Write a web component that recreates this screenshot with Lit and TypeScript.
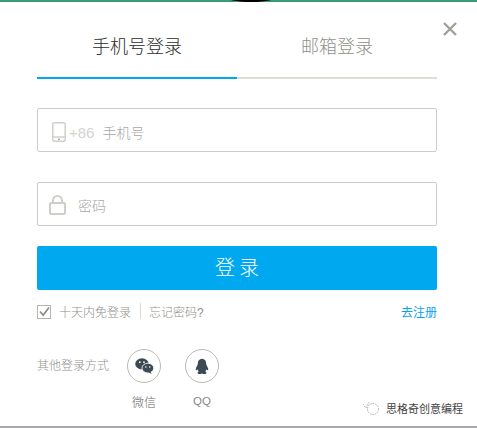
import { LitElement, css, html } from "lit";
import { customElement } from "lit/decorators.js";

@customElement("app-root")
export class AppRoot extends LitElement {
  static styles = css`
    :host {
      display: block;
      position: relative;
      width: 477px;
      height: 428px;
      overflow: hidden;
      background: #fff;
      font-family: "Liberation Sans", "Noto Sans CJK SC", sans-serif;
      color: #8f8f8a;
    }
    .page {
      height: 428px;
      display: flex;
      flex-direction: column;
      box-sizing: border-box;
    }
    .top {
      position: relative;
      height: 2px;
      flex-shrink: 0;
      overflow: hidden;
      background: #3a9a78;
    }
    .top i {
      position: absolute;
      left: 228px;
      top: -6px;
      width: 46px;
      height: 8px;
      border-radius: 50%;
      background: #000;
    }
    .close {
      position: absolute;
      left: 443px;
      top: 22px;
      width: 14px;
      height: 14px;
    }
    .body {
      flex: 1;
      display: flex;
      flex-direction: column;
      padding: 0 40px 0 37px;
    }
    .tabs {
      display: flex;
      margin-top: 26px;
      height: 49px;
      border-bottom: 2px solid #dddcd7;
    }
    .tab {
      width: 200px;
      margin-bottom: -2px;
      border-bottom: 2px solid transparent;
      text-align: center;
      font-size: 18px;
      font-weight: 300;
      line-height: 38px;
      color: #8f8f8a;
    }
    .tab.on {
      color: #2b2b2b;
      border-bottom-color: #00a8f0;
    }
    .field {
      height: 44px;
      box-sizing: border-box;
      border: 1px solid #c9ccd3;
      border-radius: 2px;
      display: flex;
      align-items: center;
      font-size: 14px;
      font-weight: 300;
      color: #a8a8a3;
    }
    .phone {
      margin-top: 29px;
      padding: 4px 0 0 14px;
    }
    .pwd {
      margin-top: 30px;
      padding: 2px 0 0 11px;
    }
    .code {
      font-size: 15px;
      margin: 0 8px 0 3px;
      color: #d4d4cf;
    }
    .pwd svg {
      margin-right: 12px;
    }
    .submit {
      margin-top: 20px;
      height: 44px;
      background: #00a8f0;
      border-radius: 2px;
      color: #fff;
      font-size: 20px;
      font-weight: 300;
      letter-spacing: 4px;
      padding-left: 4px;
      line-height: 44px;
      text-align: center;
    }
    .options {
      display: flex;
      align-items: center;
      margin-top: 12px;
      height: 18px;
      font-size: 12px;
      font-weight: 300;
    }
    .options svg {
      margin: 2px 8px 0 0;
    }
    .sep {
      width: 1px;
      height: 16px;
      background: #d8d8d4;
      margin: 0 8px 0 9px;
    }
    .register {
      margin-left: auto;
      color: #0aa2ee;
      font-weight: 400;
    }
    .others {
      display: flex;
      margin-top: 29px;
      font-size: 12px;
      font-weight: 300;
    }
    .others .lead {
      width: 90px;
      line-height: 34px;
    }
    .social {
      width: 34px;
      margin-right: 24px;
      display: flex;
      flex-direction: column;
      align-items: center;
      color: #666;
      white-space: nowrap;
    }
    .ring {
      width: 34px;
      height: 34px;
      box-sizing: border-box;
      border: 1px solid #b8b8b4;
      border-radius: 50%;
      display: flex;
      align-items: center;
      justify-content: center;
      margin-bottom: 10px;
    }
    .latin {
      margin-top: 2px;
      font-size: 11.5px;
      color: #888;
    }
    .bottom {
      height: 2px;
      flex-shrink: 0;
      background: #a8a8ac;
    }
    .mark {
      position: absolute;
      left: 362px;
      top: 400px;
      display: flex;
      align-items: center;
      gap: 6px;
      font-size: 11px;
      color: #444;
    }
  `;

  render() {
    return html`
      <div class="page">
        <div class="top"><i></i></div>
        <div class="body">
          <div class="tabs">
            <div class="tab on">手机号登录</div>
            <div class="tab">邮箱登录</div>
          </div>
          <div class="field phone">
            <svg width="14" height="20" viewBox="0 0 14 20" fill="none" stroke="#cfcfca" stroke-width="1.500">
              <rect x=".8" y=".8" width="12.400" height="18.400" rx="1.500"></rect>
              <path d="M.8 15h12.400"></path>
              <path d="M6 17.200h2" stroke="#aaa"></path>
            </svg>
            <span class="code">+86</span>手机号
          </div>
          <div class="field pwd">
            <svg width="17" height="20" viewBox="0 0 17 20" fill="none" stroke="#cfcfca" stroke-width="2">
              <rect x="1" y="8" width="15" height="11" rx="1"></rect>
              <path d="M4 8V5.500a4.500 4.500 0 0 1 9 0V8"></path>
            </svg>
            密码
          </div>
          <div class="submit">登录</div>
          <div class="options">
            <svg width="14" height="14" viewBox="0 0 14 14" fill="none">
              <rect x=".5" y=".5" width="13" height="13" stroke="#b5b5b0"></rect>
              <path d="M3 6.500l3.200 3.500L12 2.500" stroke="#8f8f8a" stroke-width="1.800"></path>
            </svg>
            十天内免登录
            <span class="sep"></span>
            忘记密码?
            <span class="register">去注册</span>
          </div>
          <div class="others">
            <div class="lead">其他登录方式</div>
            <div class="social">
              <div class="ring">
                <svg width="19" height="16" viewBox="0 0 22 19" fill="#3c4a53">
                  <ellipse cx="8" cy="7" rx="8" ry="6.600"></ellipse>
                  <ellipse cx="15" cy="12" rx="7" ry="5.800" stroke="#fff"></ellipse>
                  <path d="M18 16l1.500 3-4-2z"></path>
                  <circle cx="5.400" cy="5" r="1" fill="#fff"></circle>
                  <circle cx="10.400" cy="5" r="1" fill="#fff"></circle>
                  <circle cx="12.600" cy="10.600" r=".9" fill="#fff"></circle>
                  <circle cx="17.200" cy="10.600" r=".9" fill="#fff"></circle>
                </svg>
              </div>
              微信
            </div>
            <div class="social">
              <div class="ring">
                <svg width="14" height="17" viewBox="0 0 17 19" fill="#3c4a53">
                  <path d="M8.500 0C5 0 3.400 2.600 3.400 6c0 1-.2 1.600-1 3C1.400 10.800.600 13 1 14c.5.600 1.400-.400 2-1.200.3 1 .8 1.900 1.600 2.600C3.400 16 2.800 17 3.400 18c.8 1 3.600.9 5.100.1 1.500.8 4.300.9 5.100-.1.600-1 0-2-1.200-2.600.8-.7 1.300-1.600 1.600-2.600.6.8 1.500 1.800 2 1.200.4-1-.4-3.200-1.400-5-.8-1.400-1-2-1-3 0-3.400-1.600-6-5.100-6z"></path>
                </svg>
              </div>
              <span class="latin">QQ</span>
            </div>
          </div>
        </div>
        <div class="bottom"></div>
      </div>
      <svg class="close" viewBox="0 0 14 14" stroke="#a0a09b" stroke-width="2.400" fill="none">
        <path d="M1 1l12 12M13 1L1 13"></path>
      </svg>
      <div class="mark">
        <svg width="18" height="14" viewBox="0 0 18 14" fill="none" stroke="#999" stroke-width=".8" stroke-dasharray="1.500 1">
          <path d="M1 3l3 4 3-6"></path>
          <circle cx="11" cy="8" r="5.500"></circle>
        </svg>
        思格奇创意编程
      </div>
    `;
  }
}
